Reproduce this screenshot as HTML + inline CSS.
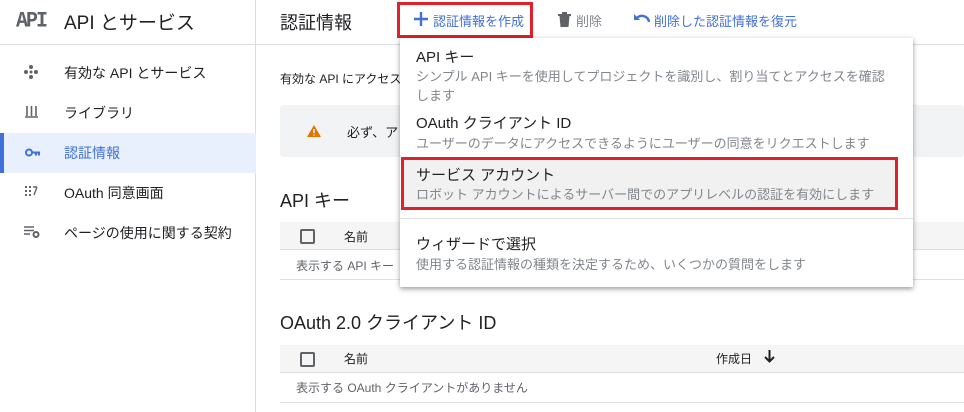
<!DOCTYPE html>
<html><head><meta charset="utf-8"><style>
*{margin:0;padding:0;box-sizing:border-box}
body{width:964px;height:412px;overflow:hidden;background:#fff;font-family:"Liberation Sans","Noto Sans CJK JP",sans-serif;color:#202124;position:relative}
.a{position:absolute;white-space:nowrap}
</style></head><body>
<div class="a" style="left:0;top:0;width:256px;height:412px;border-right:1px solid #dadce0"></div>
<div class="a" style="left:0;top:44px;width:964px;height:1px;background:#dadce0"></div>
<div class="a" style="left:16px;top:10px;font-family:'Liberation Mono',monospace;font-weight:bold;font-size:20px;color:#5f6368;letter-spacing:-2px;transform:scaleY(1.1)">API</div>
<div class="a" style="left:64px;top:8px;font-size:19px;color:#202124">API とサービス</div>
<div class="a" style="left:0;top:133px;width:256px;height:40px;background:#e8f0fe"></div>
<div class="a" style="left:0;top:133px;width:4px;height:40px;background:#4170d8"></div>
<svg class="a" style="left:24px;top:65px" width="14" height="14" viewBox="0 0 14 14"><g fill="#5f6368"><circle cx="7" cy="2" r="2"/><circle cx="7" cy="12" r="2"/><circle cx="2" cy="7" r="2"/><circle cx="12" cy="7" r="2"/><circle cx="7" cy="7" r="1.5"/></g></svg>
<div class="a" style="left:64px;top:63px;font-size:14px">有効な API とサービス</div>
<svg class="a" style="left:25px;top:106px" width="13" height="12" viewBox="0 0 13 12"><path d="M2 0v10M6.5 0v10M11 0v10M0 11h13" stroke="#5f6368" stroke-width="1.6"/></svg>
<div class="a" style="left:64px;top:103px;font-size:14px">ライブラリ</div>
<svg class="a" style="left:25px;top:148px" width="15" height="9" viewBox="0 0 15 9"><circle cx="4" cy="4.5" r="3" fill="none" stroke="#4170d8" stroke-width="2"/><path d="M7 4.5h8M11 4.5v3M14 4.5v3" stroke="#4170d8" stroke-width="2"/></svg>
<div class="a" style="left:64px;top:143px;font-size:14px;color:#4170d8">認証情報</div>
<svg class="a" style="left:25px;top:186px" width="14" height="10" viewBox="0 0 14 10"><g fill="#5f6368"><rect x="0" y="0" width="2" height="2"/><rect x="4" y="0" width="2" height="2"/><rect x="0" y="4" width="2" height="2"/><rect x="4" y="4" width="2" height="2"/><rect x="0" y="8" width="2" height="2"/><rect x="4" y="8" width="2" height="2"/></g><path d="M8 1h4M12 1L9 9" stroke="#5f6368" stroke-width="1.4" fill="none"/></svg>
<div class="a" style="left:64px;top:183px;font-size:14px">OAuth 同意画面</div>
<svg class="a" style="left:24px;top:226px" width="16" height="12" viewBox="0 0 16 12"><path d="M0 1h10M0 4.5h10M0 8h6" stroke="#5f6368" stroke-width="1.5"/><circle cx="12" cy="8.5" r="2.5" fill="none" stroke="#5f6368" stroke-width="2"/></svg>
<div class="a" style="left:64px;top:223px;font-size:14px">ページの使用に関する契約</div>
<div class="a" style="left:280px;top:9px;font-size:18px">認証情報</div>
<div class="a" style="left:397px;top:2px;width:136px;height:36px;border:3px solid #e0202a"></div>
<svg class="a" style="left:414px;top:12px" width="14" height="14" viewBox="0 0 14 14"><path d="M7 0v14M0 7h14" stroke="#4170d8" stroke-width="2.4"/></svg>
<div class="a" style="left:433px;top:11px;font-size:13px;color:#4170d8">認証情報を作成</div>
<svg class="a" style="left:558px;top:12px" width="13" height="15" viewBox="0 0 13 15"><path d="M0 2h13v2H0zM4 0h5v2H4zM1.5 4h10l-1 11h-8z" fill="#5f6368"/></svg>
<div class="a" style="left:576px;top:11px;font-size:13px;color:#80868b">削除</div>
<svg class="a" style="left:634px;top:13px" width="16" height="11" viewBox="0 0 16 11"><path d="M3 5a7 7 0 0 1 12 4" fill="none" stroke="#4170d8" stroke-width="2.4"/><path d="M0 1v6h6z" fill="#4170d8"/></svg>
<div class="a" style="left:654px;top:11px;font-size:13px;color:#4170d8">削除した認証情報を復元</div>
<div class="a" style="left:280px;top:70px;font-size:12px">有効な API にアクセス</div>
<div class="a" style="left:280px;top:105px;width:684px;height:52px;background:#f1f3f4;border-radius:4px"></div>
<svg class="a" style="left:307px;top:125px" width="14" height="12" viewBox="0 0 14 12"><path d="M7 0L14 12H0z" fill="#e37400"/><path d="M7 4v4M7 9.5v1" stroke="#fff" stroke-width="1.5"/></svg>
<div class="a" style="left:347px;top:122px;font-size:13px">必ず、ア</div>
<div class="a" style="left:280px;top:187px;font-size:18px">API キー</div>
<div class="a" style="left:280px;top:222px;width:684px;height:28px;background:#f5f5f5;border-bottom:1px solid #e0e0e0"></div>
<div class="a" style="left:300px;top:229px;width:15px;height:15px;border:2px solid #5f6368;border-radius:2px"></div>
<div class="a" style="left:344px;top:228px;font-size:12px">名前</div>
<div class="a" style="left:296px;top:257px;font-size:12px;color:#5f6368">表示する API キー</div>
<div class="a" style="left:280px;top:279px;width:684px;height:1px;background:#e0e0e0"></div>
<div class="a" style="left:280px;top:309px;font-size:18px">OAuth 2.0 クライアント ID</div>
<div class="a" style="left:280px;top:345px;width:684px;height:28px;background:#f5f5f5;border-bottom:1px solid #e0e0e0"></div>
<div class="a" style="left:300px;top:352px;width:15px;height:15px;border:2px solid #5f6368;border-radius:2px"></div>
<div class="a" style="left:344px;top:350px;font-size:12px">名前</div>
<div class="a" style="left:716px;top:350px;font-size:12px">作成日</div>
<svg class="a" style="left:764px;top:350px" width="11" height="13" viewBox="0 0 11 13"><path d="M5.5 0v11M1 7l4.5 4.5L10 7" fill="none" stroke="#202124" stroke-width="2"/></svg>
<div class="a" style="left:296px;top:379px;font-size:12px;color:#5f6368">表示する OAuth クライアントがありません</div>
<div class="a" style="left:280px;top:402px;width:684px;height:1px;background:#e0e0e0"></div>
<div class="a" style="left:400px;top:38px;width:513px;height:249px;background:#fff;box-shadow:0 2px 4px rgba(0,0,0,.3),0 1px 8px rgba(0,0,0,.12)"></div>
<div class="a" style="left:416px;top:46px;font-size:15px">API キー</div>
<div class="a" style="left:416px;top:67px;font-size:13px;color:#80868b;line-height:19px">シンプル API キーを使用してプロジェクトを識別し、割り当てとアクセスを確認<br>します</div>
<div class="a" style="left:416px;top:112px;font-size:15px">OAuth クライアント ID</div>
<div class="a" style="left:416px;top:133px;font-size:13px;color:#80868b">ユーザーのデータにアクセスできるようにユーザーの同意をリクエストします</div>
<div class="a" style="left:404px;top:160px;width:493px;height:49px;background:#f1f1f1"></div>
<div class="a" style="left:401px;top:157px;width:497px;height:53px;border:3px solid #e0202a"></div>
<div class="a" style="left:416px;top:164px;font-size:15px">サービス アカウント</div>
<div class="a" style="left:416px;top:184px;font-size:13px;color:#80868b">ロボット アカウントによるサーバー間でのアプリレベルの認証を有効にします</div>
<div class="a" style="left:400px;top:218px;width:513px;height:1px;background:#e0e0e0"></div>
<div class="a" style="left:416px;top:233px;font-size:15px">ウィザードで選択</div>
<div class="a" style="left:416px;top:254px;font-size:13px;color:#80868b">使用する認証情報の種類を決定するため、いくつかの質問をします</div>
</body></html>
